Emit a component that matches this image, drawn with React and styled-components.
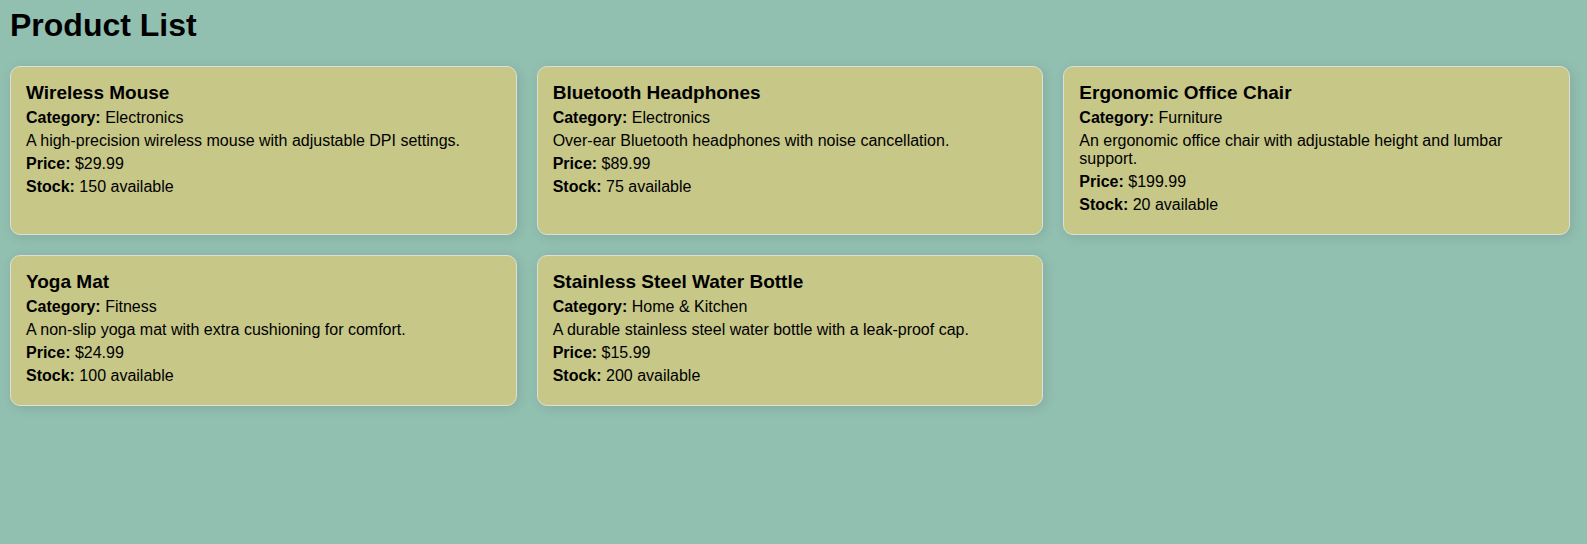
import React from "react";
import styled, { createGlobalStyle } from "styled-components";

const GlobalStyle = createGlobalStyle`
  * {
    box-sizing: border-box;
  }
  body {
    margin: 0;
    background: #91bfb0;
    color: #000;
    font-family: Arial, "Liberation Sans", sans-serif;
    font-size: 16px;
    line-height: 18px;
  }
`;

const Page = styled.main`
  padding: 6px 17px 20px 10px;
`;

const Title = styled.h1`
  margin: 0 0 22px;
  font-size: 32px;
  line-height: 38px;
`;

const Grid = styled.div`
  display: grid;
  grid-template-columns: repeat(3, minmax(0, 1fr));
  gap: 20px;
`;

const Card = styled.article`
  padding: 15px 15px 20px;
  background: #c7c788;
  border: 1px solid #ddd;
  border-radius: 10px;
  box-shadow: 2px 2px 12px rgba(0, 0, 0, 0.1);
`;

const Name = styled.h2`
  margin: 0 0 5px;
  font-size: 19px;
  line-height: 22px;
`;

const Line = styled.p`
  margin: 5px 0 0;
`;

const products = [
  {
    name: "Wireless Mouse",
    category: "Electronics",
    description: "A high-precision wireless mouse with adjustable DPI settings.",
    price: "29.99",
    stock: 150,
  },
  {
    name: "Bluetooth Headphones",
    category: "Electronics",
    description: "Over-ear Bluetooth headphones with noise cancellation.",
    price: "89.99",
    stock: 75,
  },
  {
    name: "Ergonomic Office Chair",
    category: "Furniture",
    description:
      "An ergonomic office chair with adjustable height and lumbar support.",
    price: "199.99",
    stock: 20,
  },
  {
    name: "Yoga Mat",
    category: "Fitness",
    description: "A non-slip yoga mat with extra cushioning for comfort.",
    price: "24.99",
    stock: 100,
  },
  {
    name: "Stainless Steel Water Bottle",
    category: "Home & Kitchen",
    description: "A durable stainless steel water bottle with a leak-proof cap.",
    price: "15.99",
    stock: 200,
  },
];

function ProductCard({ product }) {
  return (
    <Card>
      <Name>{product.name}</Name>
      <Line>
        <strong>Category:</strong> {product.category}
      </Line>
      <Line>{product.description}</Line>
      <Line>
        <strong>Price:</strong> ${product.price}
      </Line>
      <Line>
        <strong>Stock:</strong> {product.stock} available
      </Line>
    </Card>
  );
}

export default function App() {
  return (
    <>
      <GlobalStyle />
      <Page>
        <Title>Product List</Title>
        <Grid>
          {products.map((product) => (
            <ProductCard key={product.name} product={product} />
          ))}
        </Grid>
      </Page>
    </>
  );
}
